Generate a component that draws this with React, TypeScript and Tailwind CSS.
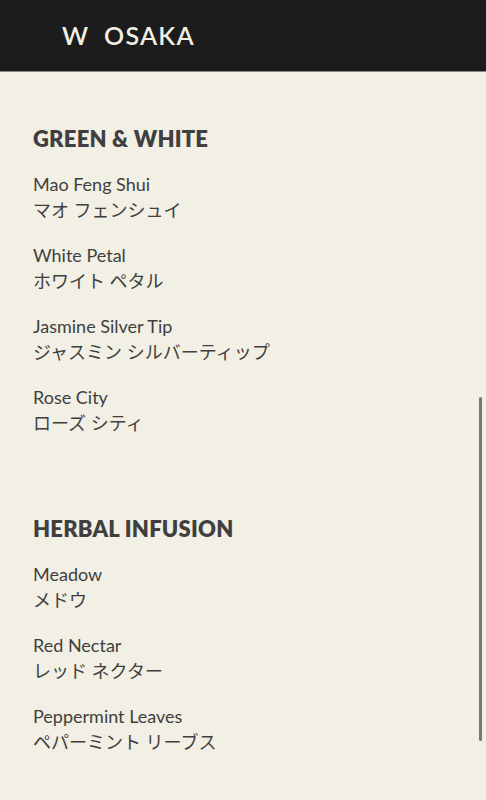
const sections = [
  {
    title: "GREEN & WHITE",
    items: [
      { en: "Mao Feng Shui", jp: "マオ フェンシュイ" },
      { en: "White Petal", jp: "ホワイト ペタル" },
      { en: "Jasmine Silver Tip", jp: "ジャスミン シルバーティップ" },
      { en: "Rose City", jp: "ローズ シティ" },
    ],
  },
  {
    title: "HERBAL INFUSION",
    items: [
      { en: "Meadow", jp: "メドウ" },
      { en: "Red Nectar", jp: "レッド ネクター" },
      { en: "Peppermint Leaves", jp: "ペパーミント リーブス" },
    ],
  },
];

const font = { fontFamily: "Lato, 'Noto Sans CJK JP', sans-serif" };

export default function App() {
  return (
    <div className="relative h-[800px] overflow-hidden bg-[#f2efe4] text-[#3f3f3f]" style={font}>
      <header className="flex h-[72px] items-center border-b border-[#8a877c] bg-[#1c1c1c] pl-[62px]">
        <span className="text-[25px] font-semibold tracking-[0.05em] text-[#f2efe4]">W&nbsp; OSAKA</span>
      </header>
      <main className="px-[33px] pt-[50px]">
        {sections.map((s) => (
          <section key={s.title} className="mb-[76px]">
            <h2 className="mb-[15px] text-[22px] font-extrabold leading-[34px] tracking-[0.01em]">{s.title}</h2>
            <ul className="flex flex-col gap-[19px]">
              {s.items.map((it) => (
                <li key={it.en} className="text-[18px] leading-[26px]">
                  <div>{it.en}</div>
                  <div>{it.jp}</div>
                </li>
              ))}
            </ul>
          </section>
        ))}
      </main>
      <div className="absolute right-[4px] top-[397px] h-[344px] w-[3px] rounded-full bg-[#7a786e]" />
    </div>
  );
}
